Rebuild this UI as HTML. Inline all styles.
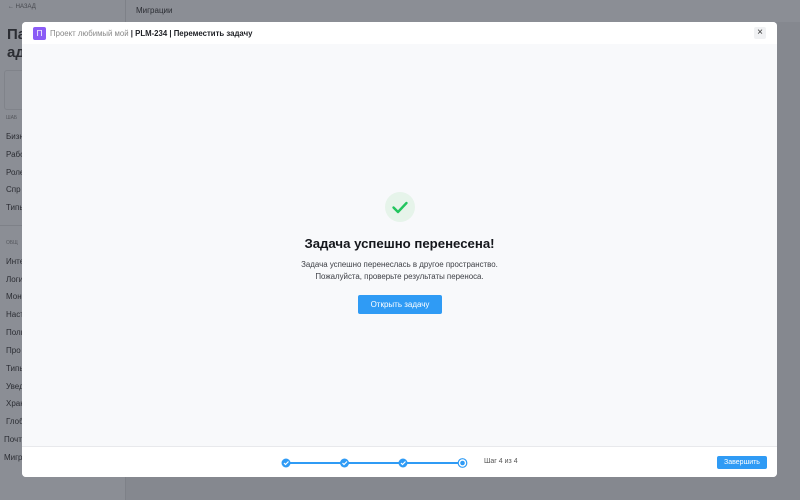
<!DOCTYPE html>
<html><head><meta charset="utf-8"><style>
*{margin:0;padding:0;box-sizing:border-box}
body{width:800px;height:500px;overflow:hidden;background:#85888f;font-family:"Liberation Sans",sans-serif;position:relative}
.side{position:absolute;left:0;top:0;width:126px;height:500px;background:#8b8e95;border-right:1px solid #7e8188}
.top{position:absolute;left:126px;top:0;right:0;height:22px;background:#8b8e95}
.t{position:absolute;color:#2b2d33;font-size:8px}
.modal{position:absolute;left:22px;top:22px;width:755px;height:455px;background:#f8f9fb;border-radius:4px;overflow:hidden}
.hd{height:22px;background:#fff;display:flex;align-items:center;padding-left:11px;font-size:7.8px;color:#1d1f24}
.logo{width:13px;height:13px;background:#8b5cf6;border-radius:2px;color:#fff;font-size:8px;display:flex;align-items:center;justify-content:center;margin-right:4px}
.close{position:absolute;right:11px;top:5px;width:12px;height:12px;border-radius:2px;background:#f0f1f3;font-size:10px;line-height:12px;text-align:center;color:#333}
.ft{position:absolute;left:0;bottom:0;width:100%;height:31px;background:#fff;border-top:1px solid #e8e9ec}
.btn{background:#2f9bf5;color:#fff;border-radius:2px;font-size:8px;display:flex;align-items:center;justify-content:center;position:absolute}
</style></head><body>
<div class="side">
<div class="t" style="left:8px;top:4px;font-size:6px;color:#45474d">← НАЗАД</div>
<div class="t" style="left:7px;top:26px;font-size:15px;font-weight:bold">Па</div>
<div class="t" style="left:7px;top:44px;font-size:15px;font-weight:bold">ад</div>
<div style="position:absolute;left:4px;top:70px;width:30px;height:40px;border:1px solid #80838a;border-radius:3px"></div>
<div class="t" style="left:6px;top:115px;font-size:5px;color:#55575d">ШАБ</div>
<div class="t" style="left:6px;top:132px">Бизн</div>
<div class="t" style="left:6px;top:150px">Рабо</div>
<div class="t" style="left:6px;top:168px">Роле</div>
<div class="t" style="left:6px;top:185px">Спр</div>
<div class="t" style="left:6px;top:203px">Типы</div>
<div style="position:absolute;left:0;top:225px;width:126px;border-top:1px solid #7e8188"></div>
<div class="t" style="left:6px;top:240px;font-size:5px;color:#55575d">ОБЩ</div>
<div class="t" style="left:6px;top:257px">Инте</div>
<div class="t" style="left:6px;top:275px">Логи</div>
<div class="t" style="left:6px;top:292px">Мон</div>
<div class="t" style="left:6px;top:310px">Наст</div>
<div class="t" style="left:6px;top:328px">Поль</div>
<div class="t" style="left:6px;top:346px">Про</div>
<div class="t" style="left:6px;top:364px">Типы</div>
<div class="t" style="left:6px;top:382px">Увед</div>
<div class="t" style="left:6px;top:399px">Хран</div>
<div class="t" style="left:6px;top:417px">Глоб</div>
<div class="t" style="left:4px;top:435px">Почт</div>
<div class="t" style="left:4px;top:453px">Мигр</div>
</div>
<div class="top"><div class="t" style="left:10px;top:6px">Миграции</div></div>
<div class="modal">
<div class="hd"><div class="logo">П</div><span style="color:#888">Проект любимый мой</span>&nbsp;<b style="font-weight:600">| PLM-234 | Переместить задачу</b></div>
<div class="close">×</div>
<div style="position:absolute;left:363px;top:170px;width:30px;height:30px;border-radius:50%;background:#e6f4ea"></div>
<svg style="position:absolute;left:363px;top:170px" width="30" height="30"><path d="M8.5 15.5l4.5 4.5 8.5-9" stroke="#22c55e" stroke-width="2.4" fill="none" stroke-linecap="round" stroke-linejoin="round"/></svg>
<div style="position:absolute;left:0;width:755px;top:214px;text-align:center;font-size:13.2px;font-weight:bold;color:#15171c">Задача успешно перенесена!</div>
<div style="position:absolute;left:0;width:755px;top:237px;text-align:center;font-size:7.9px;line-height:11.5px;color:#3c3e44">Задача успешно перенеслась в другое пространство.<br>Пожалуйста, проверьте результаты переноса.</div>
<div class="btn" style="left:336px;top:273px;width:84px;height:19px">Открыть задачу</div>
<div class="ft">
<div style="position:absolute;left:264px;top:15px;width:177px;height:2px;background:#2f9bf5"></div>
<svg style="position:absolute;left:258px;top:9px" width="190" height="14">
<g fill="#2f9bf5"><circle cx="6" cy="7" r="4.5"/><circle cx="64.5" cy="7" r="4.5"/><circle cx="123" cy="7" r="4.5"/></g>
<g stroke="#fff" stroke-width="1.2" fill="none"><path d="M4 7l1.5 1.5 3-3"/><path d="M62.5 7l1.5 1.5 3-3"/><path d="M121 7l1.5 1.5 3-3"/></g>
<circle cx="182.5" cy="7" r="4.3" fill="#fff" stroke="#2f9bf5" stroke-width="1.2"/><circle cx="182.5" cy="7" r="2.3" fill="#2f9bf5"/></svg>
<div style="position:absolute;left:462px;top:11px;font-size:7px;color:#555">Шаг 4 из 4</div>
<div class="btn" style="left:695px;top:9px;width:50px;height:13px;font-size:7px">Завершить</div>
</div>
</div>
</body></html>
